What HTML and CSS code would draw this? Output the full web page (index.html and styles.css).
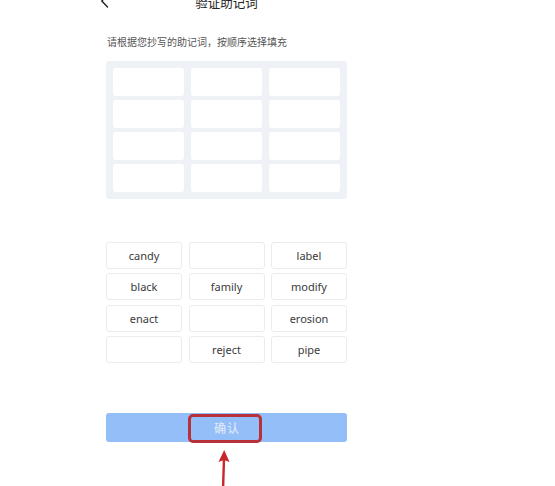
FILE: index.html
```html
<!DOCTYPE html>
<html lang="zh">
<head>
<meta charset="utf-8">
<title>验证助记词</title>
<link rel="stylesheet" href="styles.css">
</head>
<body>
<div class="page">
  <div class="header">
    <span class="back">
      <svg width="9" height="14" viewBox="0 0 9 14"><path d="M7.5 1 L1.8 7 L7.5 13" fill="none" stroke="#222" stroke-width="1.4" stroke-linecap="round" stroke-linejoin="round"/></svg>
    </span>
    <span class="title">验证助记词</span>
  </div>
  <p class="hint">请根据您抄写的助记词，按顺序选择填充</p>
  <div class="slots">
    <div class="slot"></div><div class="slot"></div><div class="slot"></div>
    <div class="slot"></div><div class="slot"></div><div class="slot"></div>
    <div class="slot"></div><div class="slot"></div><div class="slot"></div>
    <div class="slot"></div><div class="slot"></div><div class="slot"></div>
  </div>
  <div class="words">
    <div class="word">candy</div><div class="word"></div><div class="word">label</div>
    <div class="word">black</div><div class="word">family</div><div class="word">modify</div>
    <div class="word">enact</div><div class="word"></div><div class="word">erosion</div>
    <div class="word"></div><div class="word">reject</div><div class="word">pipe</div>
  </div>
  <div class="confirm">
    <span class="confirm-text">确认</span>
    <span class="highlight"></span>
  </div>
  <div class="arrow-row">
    <svg class="arrow" width="16" height="40" viewBox="0 0 16 40"><path d="M8 8 L7 40" stroke="#c8262c" stroke-width="2.4" fill="none"/><path d="M8.2 0 L13.5 12 L8 10 L2.5 12 Z" fill="#c8262c"/></svg>
  </div>
</div>
</body>
</html>
```
FILE: styles.css
```css
html, body {
  margin: 0;
  padding: 0;
  background: #ffffff;
}
body {
  font-family: "Noto Sans", "Noto Sans CJK SC", sans-serif;
  color: #333;
}
.page {
  width: 241px;
  margin-left: 106px;
  display: flex;
  flex-direction: column;
}
.header {
  position: relative;
  height: 20px;
  margin-top: -8px;
  display: flex;
  align-items: center;
  justify-content: center;
}
.back {
  position: absolute;
  left: -6px;
  top: 2px;
  display: flex;
}
.title {
  font-family: "Noto Sans CJK SC", sans-serif;
  font-size: 12.5px;
  color: #222;
}
.hint {
  margin: 23px 0 0 1px;
  font-family: "Noto Sans CJK SC", sans-serif;
  font-size: 10px;
  line-height: 14px;
  color: #555;
}
.slots {
  margin-top: 12px;
  background: #eef2f7;
  border-radius: 3px;
  padding: 7px;
  display: grid;
  grid-template-columns: repeat(3, 1fr);
  grid-auto-rows: 28px;
  column-gap: 7px;
  row-gap: 4px;
}
.slot {
  background: #ffffff;
  border-radius: 3px;
}
.words {
  margin-top: 43px;
  display: grid;
  grid-template-columns: repeat(3, 1fr);
  grid-auto-rows: 27px;
  column-gap: 6.5px;
  row-gap: 4.3px;
}
.word {
  box-sizing: border-box;
  border: 1px solid #ececec;
  border-radius: 3px;
  display: flex;
  align-items: center;
  justify-content: center;
  font-size: 11px;
  color: #3a3a3a;
}
.confirm {
  position: relative;
  margin-top: 50px;
  height: 29px;
  background: #94bef7;
  border-radius: 3px;
  display: flex;
  align-items: center;
  justify-content: center;
}
.confirm-text {
  font-family: "Noto Sans CJK SC", sans-serif;
  font-size: 12px;
  color: #e4ecf8;
  letter-spacing: 1px;
  margin-left: 1px;
}
.highlight {
  position: absolute;
  left: 82px;
  top: 1px;
  width: 74px;
  height: 29px;
  box-sizing: border-box;
  border: 3px solid #b8303a;
  border-radius: 5px;
}
.arrow-row {
  display: flex;
  justify-content: center;
  margin-top: 8px;
  padding-right: 6px;
}
.arrow {
  display: block;
}
```
